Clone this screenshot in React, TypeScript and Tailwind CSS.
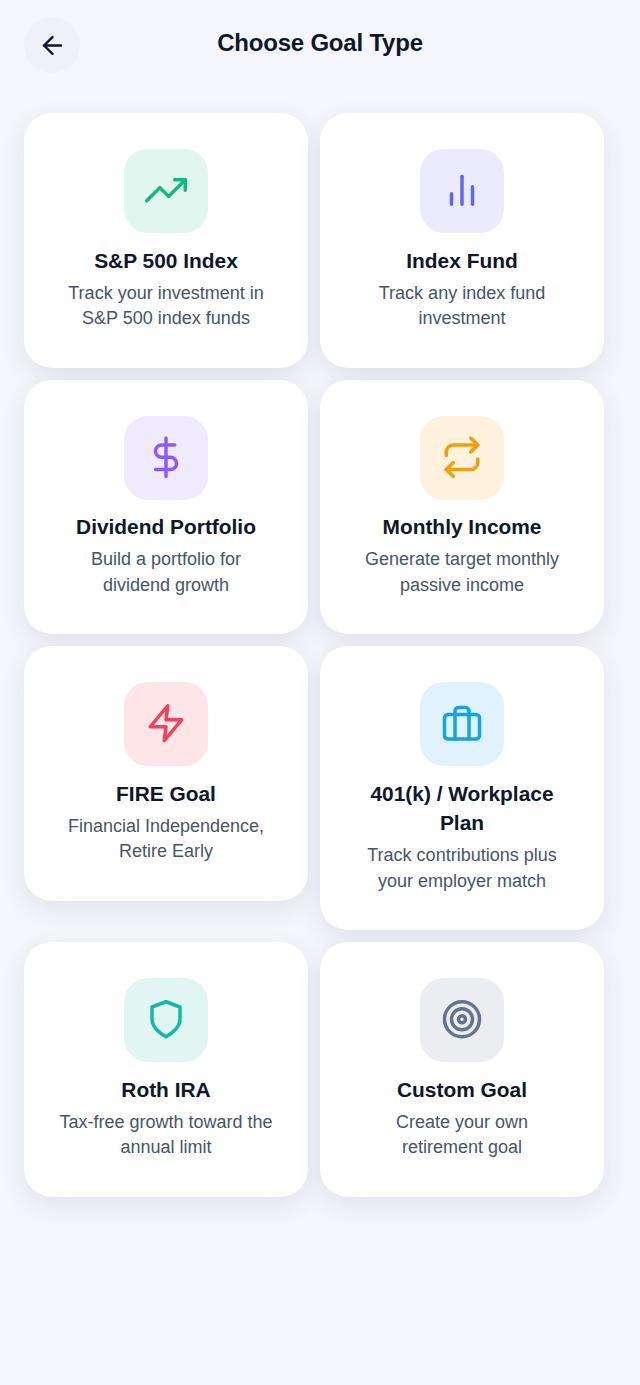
import {
  FiArrowLeft,
  FiBarChart2,
  FiBriefcase,
  FiDollarSign,
  FiRepeat,
  FiShield,
  FiTarget,
  FiTrendingUp,
  FiZap,
} from "react-icons/fi";

const goals = [
  { icon: FiTrendingUp, title: "S&P 500 Index", text: "Track your investment in S&P 500 index funds", box: "bg-[#e0f6ee]", tint: "text-[#10b981]" },
  { icon: FiBarChart2, title: "Index Fund", text: "Track any index fund investment", box: "bg-[#ebebfd]", tint: "text-[#6366f1]" },
  { icon: FiDollarSign, title: "Dividend Portfolio", text: "Build a portfolio for dividend growth", box: "bg-[#f0eafe]", tint: "text-[#8b5cf6]" },
  { icon: FiRepeat, title: "Monthly Income", text: "Generate target monthly passive income", box: "bg-[#fef1de]", tint: "text-[#f59e0b]" },
  { icon: FiZap, title: "FIRE Goal", text: "Financial Independence, Retire Early", box: "bg-[#ffe4e8]", tint: "text-[#f43f5e]" },
  { icon: FiBriefcase, title: "401(k) / Workplace Plan", text: "Track contributions plus your employer match", box: "bg-[#e0f2fe]", tint: "text-[#0ea5e9]" },
  { icon: FiShield, title: "Roth IRA", text: "Tax-free growth toward the annual limit", box: "bg-[#e1f6f3]", tint: "text-[#14b8a6]" },
  { icon: FiTarget, title: "Custom Goal", text: "Create your own retirement goal", box: "bg-[#ebedf1]", tint: "text-[#64748b]" },
];

export default function App() {
  return (
    <div className="min-h-[1385px] bg-[#f5f6fb] px-6 pt-[17px] font-['Liberation_Sans',sans-serif]">
      {/* Header */}
      <div className="relative flex h-14 items-center">
        <button className="flex h-14 w-14 items-center justify-center rounded-full bg-[#eff1f8] text-[#0f172a]">
          <FiArrowLeft size={29} />
        </button>
        <h1 className="absolute inset-x-0 top-[9px] text-center text-2xl leading-[34px] font-bold tracking-[-0.2px] text-[#0f172a]">
          Choose Goal Type
        </h1>
      </div>

      {/* Cards */}
      <div className="mt-10 mr-3 grid grid-cols-2 items-start gap-3">
        {goals.map((goal) => {
          const Icon = goal.icon;
          return (
            <div
              key={goal.title}
              className="flex flex-col items-center rounded-[28px] bg-white px-[34px] py-9 text-center shadow-[0_8px_24px_rgba(40,50,110,0.1)]"
            >
              <div className={`flex h-[84px] w-[84px] items-center justify-center rounded-3xl ${goal.box} ${goal.tint}`}>
                <Icon size={42} className="-translate-y-[0.75px]" />
              </div>
              <h3 className="mt-[12.6px] text-[20.9px] leading-[29.4px] font-bold text-[#0f172a]">{goal.title}</h3>
              <p className="mt-[5.6px] text-lg leading-[25.5px] text-[#475569]">{goal.text}</p>
            </div>
          );
        })}
      </div>
    </div>
  );
}
